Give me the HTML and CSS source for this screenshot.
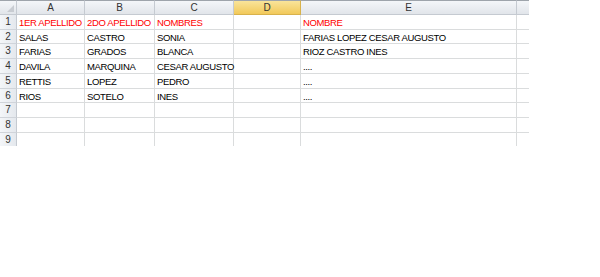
FILE: index.html
```html
<!DOCTYPE html>
<html lang="en">
<head>
  <meta charset="UTF-8">
  <title>Hoja1</title>
  <link rel="stylesheet" href="styles.css">
</head>
<body>
  <div class="sheet">
    <div class="hd corner"><span class="tri"></span></div>
    <div class="hd">A</div>
    <div class="hd">B</div>
    <div class="hd">C</div>
    <div class="hd sel">D</div>
    <div class="hd">E</div>
    <div class="hd end"></div>

    <div class="rh">1</div>
    <div class="c red">1ER APELLIDO</div>
    <div class="c red">2DO APELLIDO</div>
    <div class="c red">NOMBRES</div>
    <div class="c"></div>
    <div class="c red">NOMBRE</div>
    <div class="c"></div>

    <div class="rh">2</div>
    <div class="c">SALAS</div>
    <div class="c">CASTRO</div>
    <div class="c">SONIA</div>
    <div class="c"></div>
    <div class="c">FARIAS LOPEZ CESAR AUGUSTO</div>
    <div class="c"></div>

    <div class="rh">3</div>
    <div class="c">FARIAS</div>
    <div class="c">GRADOS</div>
    <div class="c">BLANCA</div>
    <div class="c"></div>
    <div class="c">RIOZ CASTRO INES</div>
    <div class="c"></div>

    <div class="rh">4</div>
    <div class="c">DAVILA</div>
    <div class="c">MARQUINA</div>
    <div class="c">CESAR AUGUSTO</div>
    <div class="c"></div>
    <div class="c">....</div>
    <div class="c"></div>

    <div class="rh">5</div>
    <div class="c">RETTIS</div>
    <div class="c">LOPEZ</div>
    <div class="c">PEDRO</div>
    <div class="c"></div>
    <div class="c">....</div>
    <div class="c"></div>

    <div class="rh">6</div>
    <div class="c">RIOS</div>
    <div class="c">SOTELO</div>
    <div class="c">INES</div>
    <div class="c"></div>
    <div class="c">....</div>
    <div class="c"></div>

    <div class="rh">7</div>
    <div class="c"></div>
    <div class="c"></div>
    <div class="c"></div>
    <div class="c"></div>
    <div class="c"></div>
    <div class="c"></div>

    <div class="rh">8</div>
    <div class="c"></div>
    <div class="c"></div>
    <div class="c"></div>
    <div class="c"></div>
    <div class="c"></div>
    <div class="c"></div>

    <div class="rh last">9</div>
    <div class="c last"></div>
    <div class="c last"></div>
    <div class="c last"></div>
    <div class="c last"></div>
    <div class="c last"></div>
    <div class="c last"></div>
  </div>
</body>
</html>
```

FILE: styles.css
```css
body { margin: 0; background: #fff; font-family: "Liberation Sans", Arial, sans-serif; font-size: 9.5px; color: #000; }
.sheet { display: grid; width: 529px; grid-template-columns: 17px 68px 70px 79px 67px 216px 12px; grid-template-rows: 15px 15px 14px 15px 15px 15px 14px 15px 15px 13px; }
.hd { background: linear-gradient(#f4f6f9, #e1e5ea); border-top: 1px solid #9ea4ab; border-right: 1px solid #c5cad1; border-bottom: 1px solid #c5cad1; box-sizing: border-box; text-align: center; line-height: 13px; font-size: 10px; color: #333; }
.hd.sel { background: linear-gradient(#f9e49a, #f2c95a); border-right-color: #d8b24c; border-bottom-color: #d8b24c; }
.hd.end { border-right: none; }
.corner { position: relative; }
.tri { position: absolute; right: 2px; bottom: 2px; width: 0; height: 0; border-left: 7px solid transparent; border-bottom: 7px solid #c8ccd2; }
.rh { background: linear-gradient(90deg, #f4f6f9, #e4e8ed); border-right: 1px solid #c5cad1; border-bottom: 1px solid #d0d4da; box-sizing: border-box; text-align: center; line-height: 14px; font-size: 10px; color: #333; }
.c { border-right: 1px solid #dadcdd; border-bottom: 1px solid #dadcdd; box-sizing: border-box; padding-left: 2px; line-height: 15px; letter-spacing: -0.35px; white-space: nowrap; overflow: visible; }
.c:nth-child(7n) { border-right: none; }
.c.last, .rh.last { border-bottom: none; }
.red { color: #ff0000; }
```
